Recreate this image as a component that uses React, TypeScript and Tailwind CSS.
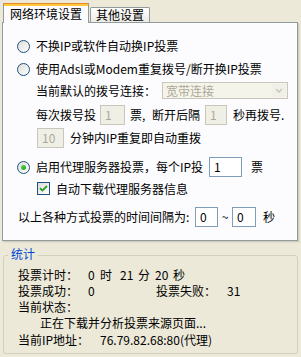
import React from "react";

const FONT = { fontFamily: '"Noto Sans CJK SC", "Noto Sans", sans-serif' };

function Radio({ checked }: { checked?: boolean }) {
  return (
    <span className="relative inline-flex h-[13px] w-[13px] shrink-0 items-center justify-center rounded-full border border-[#1c5180] bg-gradient-to-br from-[#dcdcd7] to-white">
      {checked && (
        <span className="h-[5px] w-[5px] rounded-full bg-gradient-to-br from-[#55d551] to-[#21a121]" />
      )}
    </span>
  );
}

function Check() {
  return (
    <span className="inline-flex h-[13px] w-[13px] shrink-0 items-center justify-center border border-[#1c5180] bg-gradient-to-br from-[#dcdcd7] to-white">
      <svg width="9" height="9" viewBox="0 0 9 9">
        <path d="M1 4.2 L3.4 6.6 L8 2" fill="none" stroke="#21a121" strokeWidth="1.8" />
      </svg>
    </span>
  );
}

function Field({
  value,
  w,
  disabled,
}: {
  value: string;
  w: string;
  disabled?: boolean;
}) {
  return (
    <span
      className={`inline-flex h-[20px] shrink-0 items-center border pl-[4px] ${w} ${
        disabled
          ? "border-[#c9c7ba] bg-[#f0efe6] text-[#aca899]"
          : "border-[#7f9db9] bg-white text-black"
      }`}
    >
      {value}
    </span>
  );
}

export default function App() {
  return (
    <div
      className="h-[357px] w-[301px] overflow-hidden bg-[#ece9d8] text-[12px] leading-[12px] text-black"
      style={FONT}
    >
      {/* tabs */}
      <div className="relative z-10 flex h-[22px] items-end pl-[3px]">
        <div className="mb-[-1px] flex h-[20px] w-[86px] flex-col border-x border-[#919b9c] bg-[#fcfcfe]">
          <div className="h-[1px] bg-[#e68b2c]" />
          <div className="h-[2px] bg-[#ffc73c]" />
          <div className="flex flex-1 items-center justify-center pb-[2px]">网络环境设置</div>
        </div>
        <div className="ml-[1px] flex h-[15px] w-[60px] items-center justify-center rounded-t-[2px] border border-b-0 border-[#919b9c] bg-gradient-to-b from-white to-[#ecebe5]">
          其他设置
        </div>
      </div>

      {/* panel */}
      <div className="ml-[2px] h-[219px] w-[296px] border border-[#919b9c] bg-[#fcfcfe] pt-[15px] shadow-[1px_1px_0_#d0cdbf,2px_2px_0_#e2dfd0]">
        <div className="flex h-[16px] items-center pl-[14px]">
          <Radio />
          <span className="ml-[6px]">不换IP或软件自动换IP投票</span>
        </div>
        <div className="mt-[7px] flex h-[16px] items-center pl-[14px]">
          <Radio />
          <span className="ml-[6px]">使用Adsl或Modem重复拨号/断开换IP投票</span>
        </div>
        <div className="mt-[5px] flex h-[17px] items-center pl-[33px]">
          <span className="w-[126px]">当前默认的拨号连接：</span>
          <span className="flex h-[17px] w-[126px] items-center border border-[#c9c7ba] bg-[#f5f4ea] pl-[3px] text-[#aca899]">
            <span className="flex-1">宽带连接</span>
            <span className="mr-[1px] flex h-[13px] w-[14px] items-center justify-center bg-[#f0efe8]">
              <svg width="8" height="5" viewBox="0 0 8 5">
                <path d="M1 1 L4 4 L7 1" fill="none" stroke="#c9c7ba" strokeWidth="1.5" />
              </svg>
            </span>
          </span>
        </div>
        <div className="mt-[6px] flex h-[20px] items-center pl-[33px]">
          <span className="w-[64px]">每次拨号投</span>
          <Field value="1" w="w-[25px]" disabled />
          <span className="ml-[5px] w-[22px]">票,</span>
          <span className="w-[53px]">断开后隔</span>
          <Field value="1" w="w-[22px]" disabled />
          <span className="ml-[6px]">秒再拨号.</span>
        </div>
        <div className="mt-[3px] flex h-[20px] items-center pl-[34px]">
          <Field value="10" w="w-[27px]" disabled />
          <span className="ml-[6px]">分钟内IP重复即自动重拨</span>
        </div>
        <div className="mt-[9px] flex h-[20px] items-center pl-[14px]">
          <Radio checked />
          <span className="ml-[6px] w-[173px]">启用代理服务器投票，每个IP投</span>
          <Field value="1" w="w-[33px]" />
          <span className="ml-[9px]">票</span>
        </div>
        <div className="mt-[5px] flex h-[13px] items-center pl-[34px]">
          <Check />
          <span className="ml-[6px]">自动下载代理服务器信息</span>
        </div>
        <div className="mt-[12px] flex h-[20px] items-center pl-[15px]">
          <span className="w-[177px]">以上各种方式投票的时间间隔为:</span>
          <Field value="0" w="w-[23px]" />
          <span className="w-[14px] text-center">~</span>
          <Field value="0" w="w-[24px]" />
          <span className="ml-[7px]">秒</span>
        </div>
      </div>

      {/* stats group */}
      <div className="relative ml-[3px] mt-[14px] h-[99px] w-[295px] rounded-[3px] border border-[#d0d0bf] pl-[14px] pt-[13px]">
        <span className="absolute left-[4px] top-[-8px] bg-[#ece9d8] px-[3px] text-[#0046d5]">统计</span>
        <div className="flex">
          <span className="w-[70px]">投票计时：</span>
          <span className="w-[12px]">0</span>
          <span className="w-[20px]">时</span>
          <span className="w-[18px]">21</span>
          <span className="w-[17px]">分</span>
          <span className="w-[18px]">20</span>
          <span>秒</span>
        </div>
        <div className="mt-[4px] flex">
          <span className="w-[70px]">投票成功：</span>
          <span className="w-[68px]">0</span>
          <span className="w-[71px]">投票失败：</span>
          <span>31</span>
        </div>
        <div className="mt-[4px]">当前状态：</div>
        <div className="mt-[4px] pl-[22px]">正在下载并分析投票来源页面...</div>
        <div className="mt-[5px] flex">
          <span className="w-[82px]">当前IP地址：</span>
          <span>76.79.82.68:80(代理)</span>
        </div>
      </div>
    </div>
  );
}
